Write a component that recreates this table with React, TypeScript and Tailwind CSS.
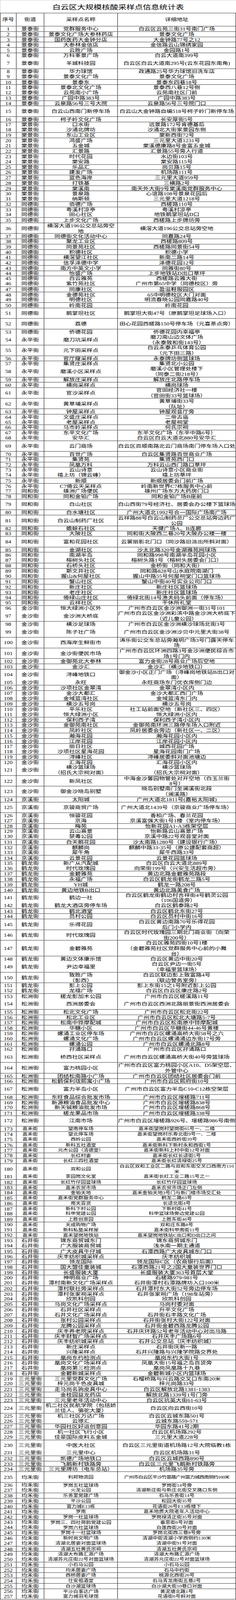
import React, { useState } from 'react'

// 街道|采样点名称|详细地址   ("^" = line break inside a cell)
const ROWS: string[] = [
  '景泰街|党群服务中心|白云区云苑三街31号南门广场',
  '景泰街|景泰文化广场大参林药店|景泰文化广场',
  '景泰街|国药医药大金钟分店|大金钟路77号之12',
  '景泰街|大参林金信店|金信路云山锦绣家园',
  '景泰街|云胜广场|金园路1号',
  '景泰街|万科峯景广场|白云大道南399号',
  '景泰街|羊城科技园|白云区白云大道南295号(云东花园东南角)',
  '景泰街|华力球馆|政通路25号华力球馆旧洗车店',
  '景泰街|景泰文化广场|景泰文化广场',
  '景泰街|景泰东|景泰东四巷18号',
  '景泰街|景泰北文化广场|景泰西八巷12号侧',
  '景泰街|云苑南小广场|云苑南社区门前',
  '景泰街|广园中路383号|广园中路383号',
  '景泰街|云泉路56号三号大院|云泉路56号三号院门口',
  '景泰街|白云山西南门新停车场|白云山大金钟路自编518号柯子岭门新停车场',
  '景泰街|柯子岭文化广场|长安厚街5号',
  '棠景街|口水街|远景路172号肯德基后',
  '棠景街|沙涌北牌坊|沙涌北大街家景园东侧',
  '棠景街|东山工业区|棠新西街72号',
  '棠景街|鸿盛广场|三元里大道1231号',
  '棠景街|五金城|棠溪德康路8号金富五金城',
  '棠景街|汇景路|汇景路55号旁人行道',
  '棠景街|时代花园|水边街103号',
  '棠景街|棠安路|棠安路115号',
  '棠景街|乐品汇|岗贝路15号',
  '棠景街|建发广场|机场路111号',
  '棠景街|蓝色海岸|三元里大道959号',
  '棠景街|打铁基|三横路2号',
  '棠景街|棠溪南|南天外大街9号棠溪南党群服务中心',
  '棠景街|景泉路|心谊路108号景泉花园后',
  '棠景街|纳斯顿|三元里大道1218号',
  '同德街|佰德广场|西槎路110号',
  '同德街|粤溪村凉亭|粤溪村凉亭',
  '同德街|田心社区|地铁鹅掌坦站D口',
  '同德街|上步文化广场|西槎路上步牌坊旁',
  '同德街|横滘大道196公交总站旁空^地|横滘大道196公交总站旁空地',
  '同德街|同德街文化活动中心|同嘉路24号',
  '同德街|聚龙工业区|西槎路809号',
  '同德街|同景苑社区|西槎路同景街54号',
  '同德街|积德社区|积德小学',
  '同德街|横滘望江社区|新南二路14号',
  '同德街|信孚泽德中学|泽德花园12号',
  '同德街|南方中英文小学|同雅街80号',
  '同德街|怡盛广场|上步地铁站D出口草坪',
  '同德街|白云雅苑|西槎路云雅大街',
  '同德街|紫竹苑社区|广州市第65中学（同德校区）旁',
  '同德街|同康社区|盈溢鞋服园区',
  '同德街|金德苑社区|65中明德校区大门对面',
  '同德街|明德社区|明流春晓公园同嘉路40号',
  '同德街|岭南花园|岭南花园',
  '同德街|鹅掌坦社区|鹅掌坦大街47号（原鹅掌坦足球场入口）',
  '同德街|荔德|田心花园西槎路150号停车场（元喜茶点旁）',
  '同德街|侨德花园|侨德花园内幸福亭',
  '永平街|磨刀坑采样点|磨刀南山边文体广场^（永泰致和街143号）',
  '永平街|元下田采样点|白云永泰乒乓体育公园^（元下田三路）',
  '永平街|官厅窿采样点|永泰牌坊侧篮球场',
  '永平街|集贤庄采样点|集贤北小公园',
  '永平街|磨溪小区采样点|磨溪小区管理处楼下^（同泰二街218号）',
  '永平街|解放庄采样点|解放庄北路停车场',
  '永平街|横岗采样点|横岗球场',
  '永平街|官沙采样点|官田经济社一楼^（官田街33号篮球场）',
  '永平街|黄草埔采样点|黄草埔街33号^（队址）',
  '永平街|钟屋采样点|钟屋观音厅旁',
  '永平街|文盛庄采样点|二帝古庙',
  '永平街|老屋采样点|老屋祠堂',
  '永平街|马市岭采样点|何氏宗祠',
  '永平街|东平文化广场|东平文化广场（东平中路6号）',
  '永平街|安华汇|白云区白云大道北880号安华汇',
  '永平街|云门商场|白云区百顺南路北云门商场南门停车场入口处',
  '永平街|百世广场|白云区集贤路百世商业广场',
  '永平街|集贤苑|集贤苑西门口',
  '永平街|凤凰万科|万科云山西门路口草坪',
  '永平街|云山诗意|云山诗意小区商业街',
  '永平街|禧上坊（锦云峰）|禧上坊草坪',
  '永平街|新顺|新顺居委会门前广场',
  '永平街|C7倚云天采样点|岭南新世界C7栋服务中心前',
  '同和街|雄洲广场便民|雄州广场东方大药房门口',
  '同和街|同和金铂广场|同和金铂广场B座前',
  '同和街|白山社区|白山西街79号经济社、居委会办公楼下篮球场',
  '同和街|白水塘社区|广州大道北1992号合一国际广场南广场',
  '同和街|白云山制药厂社区|云祥路88号白云山制药总厂公交总站旁边药厂^公园',
  '同和街|蟾蜍石社区|天健广场A、B连廊',
  '同和街|大陂社区|同和街大陂西二巷20号大陂办公楼一楼',
  '同和街|富和花园社区|云裳丽影北门口（同沙路旧派出所斜对面）',
  '同和街|金湖社区|沙太北路320号金湖雅苑网球场',
  '同和街|南湖半岛|同和路998号南湖半岛花园小区',
  '同和街|榕树头社区|榕树头路1号（榕树头居委会门口）',
  '同和街|石桥头社区|金桥街（同和大街）',
  '同和街|斯文井社区|同和路828号山水庭院南湖门',
  '同和街|握山&何屋社区|握山中路55号何屋祠堂门口篮球场',
  '同和街|蟹山社区|蟹山中街40号实业公司门口',
  '同和街|新庄社区|新庄社区篮球场',
  '同和街|老庄社区|新庄社区篮球场',
  '同和街|倚绿山庄社区|倚绿北街14号渔夫码头前面（停车场）',
  '同和街|云祥社区|干休所礼堂',
  '金沙街|恒大绿洲小区外|广州市白云区金沙洲御洲一街31号101',
  '金沙街|金沙洲大桥底|广州市白云区金沙洲彩滨中路金沙洲大桥底下^（近儿童公园）',
  '金沙街|横沙足球场|广州市白云区金沙洲横沙球场北街3号',
  '金沙街|陈子壮广场|广州市白云区金沙洲沙贝中元里大街38号',
  '金沙街|西海岸生鲜街市|涛乐街公交车总站旁瀚玥广场3号门露天停车^场',
  '金沙街|金沙街便民市场|广州市白云区环洲四路3号金沙洲便民综合市^场1号门内',
  '金沙街|金御苑北大参林|富力金街28号商业广场后空地',
  '金沙街|金沙汇|金沙汇（横沙地铁口）',
  '金沙街|浔峰地铁口|御金沙小区正门广场（浔峰岗地铁站B出口对^面）',
  '金沙街|永旺|永旺商场东门优衣库侧门边',
  '金沙街|沙项社区金翠湾|金翠湾小区内',
  '金沙街|金沙大都汇|金沙大都汇西门广场',
  '金沙街|金域蓝湾社区|金域蓝湾东门内',
  '金沙街|横沙五号岗|横沙五号岗',
  '金沙街|平乐社区|社工站前面空地（新社区三、四区）',
  '金沙街|恒大绿洲小区|恒大绿洲小区内',
  '金沙街|保利西子湾|保利西子湾小区内',
  '金沙街|金御苑南社区|金御苑南环洲三路停车场入口附近',
  '金沙街|凤岭社区|凤岭居委会旁边（新社区一、二区）',
  '金沙街|瀚海花园|瀚海花园小区内',
  '金沙街|江岸花园|江岸花园小区内',
  '金沙街|丽日社区|城西花园广场',
  '金沙街|沙项社区星海花园|星海花园南门广场',
  '金沙街|浔峰社区|浔峰居委斜对面池塘边',
  '金沙街|汇海花园|汇海花园小区内',
  '金沙街|横沙篮球场^（招氏大宗祠对面）|横沙篮球场^（招氏大宗祠对面）',
  '金沙街|新凤社区|中海金沙馨园物管处对开空地（白玉兰街^8号）',
  '金沙街|御金沙晓岛别墅|晓岛别墅南门至澜溪街北段^（澜溪路）',
  '京溪街|太阳城|广州大道北1811号(嘉裕太阳城)',
  '京溪街|京骏商贸广场|广州大道北1439号（京骏商业广场停车场）',
  '京溪街|恒骏花园|香柏广场、春兰花园',
  '京溪街|京海|京溪富强大街1号1楼（室内停车场）',
  '京溪街|梅苑|怡新花园A1-A3栋架空层',
  '京溪街|云山熹景|怡新路云山熹景广场',
  '京溪街|禁毒公园|京溪中路22号观音堂对面',
  '京溪街|白天鹅花园|沙太南路1280号（建设银行广场）',
  '京溪街|麒麟岗|麒麟中路33-35号（原公建配套商超）',
  '京溪街|犀牛角|犀牛西路33号',
  '京溪街|云景花园|云景花园篮球场',
  '鹤龙街|新广从汽配城|白云区白云大道北889号',
  '鹤龙街|时代玫瑰园|向荣街199号（兴安生活超市旁）',
  '鹤龙街|金碧雅苑|黄边北路金碧雅苑路段',
  '鹤龙街|永福广场|白云区鹤龙街鹤龙二路5号',
  '鹤龙街|YH城|鹤龙一路208号',
  '鹤龙街|黄边地铁B出口|黄边北路美食广场',
  '鹤龙街|鹤边一社|白云区鹤龙街鹤边村吉祥街4号鹤灵公园^（106国道旁）',
  '鹤龙街|鹤龙大酒店旁停车场|白云区鹤泰路2号',
  '鹤龙街|鹤北酒堂|白云区鹤北东街27号',
  '鹤龙街|员村公园|白云区员村中街16号',
  '鹤龙街|乐得花园|白云区黄边南路70号乐得花园^后门小学内',
  '鹤龙街|时代玫瑰园|白云区时代玫瑰园三期北门商业街（向荣^街200号）',
  '鹤龙街|金碧雅苑|白云区雅苑四街10号1楼^（金碧雅苑社区党群服务中心前的小舞^台）',
  '鹤龙街|黄边文体康乐馆|白云区黄边中街20号',
  '鹤龙街|尹边幸福里|白云区尹边一街5号^（幸福里篮球场）',
  '鹤龙街|致胜广场^（彭西）|白云区联边彭上致富路4号^（联边警务室旁）',
  '鹤龙街|彭上公园|彭上东街15之1号附近彭上公园',
  '鹤龙街|龙禧广场|白云区白云区康庄路2号',
  '松洲街|槎龙彭加木公园|广州市白云区槎溪路11号',
  '松洲街|西洲居委会|广州市白云区西洲北路丽景街西洲居委会',
  '松洲街|松北文化广场|广州市白云区松北街22号',
  '松洲街|松北工业区|广州市白云区松北大塘路5-7号',
  '松洲街|松南中铧摩配城|广州市白云区松南原中铧摩配城',
  '松洲街|华糖小区|广州市白云区华糖街44-46号黄楼',
  '松洲街|螺涌工业区停车场|广州市白云区螺涌高桥大街58号之六',
  '松洲街|螺涌文化广场|广州市白云区螺涌涌边东街17号旁',
  '松洲街|螺涌公园|广州市白云区螺涌北路8号',
  '松洲街|孖涌路口|广州市白云区孖涌路口',
  '松洲街|桥西社区采样点|广州市白云区螺涌高桥大街40号旁篮球场',
  '松洲街|富力桃园小区|广州市白云区富力桃园小区A10、D5架空层、^外管中心',
  '松洲街|团结松南路小广场|广州市白云区团结社区居委会门前',
  '松洲街|松鹤保利珑熙寓小广场|广州市白云区熙府街10号',
  '松洲街|富力半岛小区|广州市白云区富力半岛C10-C12栋空架层',
  '松洲街|东旺食品综合批发市场|广州市白云区增槎路711号',
  '松洲街|新源粮油食品批发中心|广州市白云区增槎路838号',
  '松洲街|新天铖粮油批发市场|广州市白云区增槎路868号',
  '松洲街|槎龙果品市场|广州市白云区增槎路338号',
  '松洲街|江南市场|广州市白云区增槎路926号、增槎路986号南侧',
  '嘉禾街|望南停车场|嘉禾街望岗村望岗街65号一、二楼',
  '嘉禾街|望北停车场|嘉禾街望岗村乐寿北街9号一、二楼',
  '嘉禾街|西岭公园|嘉禾街西岭街39号',
  '嘉禾街|新科五社酒堂|嘉禾街新科下新村永和西街1号',
  '嘉禾街|元杰公园（清德堂）|嘉禾街新科上村中街12号对面',
  '嘉禾街|长红村委|嘉禾街长红长迳街5号',
  '嘉禾街|长红三四社酒堂|嘉禾街长红清禄街25号',
  '嘉禾街|双和公园|白云区双和工业区二路与双和东街交叉口西南方110^米',
  '嘉禾街|茶园岗文化室|嘉禾街长红工业二路15号之一',
  '嘉禾街|长红竹仔园篮球场|长红竹仔园篮球场',
  '嘉禾街|嘉禾农贸市场|嘉禾农贸市场正门左侧',
  '嘉禾街|金铂天地|嘉禾金铂天地3号门与新门楼市场交汇处',
  '嘉禾街|嘉禾街党群服务中心|鹤龙二路63号',
  '嘉禾街|南天百货|长迳北街4号',
  '嘉禾街|新科下村公园|下新村街41号',
  '嘉禾街|科甲党建公园|科甲篮球场旁边党建公园',
  '嘉禾街|上胜创意园|上胜东街46号',
  '嘉禾街|天成购物广场|双和庄东路8号',
  '嘉禾街|新科私塾采样屋|嘉禾街科甲南街11号',
  '嘉禾街|嘉禾望岗地铁站|嘉禾望岗地铁站C出口和D出口之间',
  '石井街|锦东商贸城东门|锦东商贸城东门',
  '石井街|广大服装商贸城|浅水南一期主通道',
  '石井街|广大皮具牛仔城|石潭西路广大皮具城东门口',
  '石井街|庆丰纺织城采样点|庆丰纺织城',
  '石井街|领龙国际|领龙国际C区（农商银行后面）',
  '石井街|国大盟佳童装城|石潭西路21号之2国大童装世界门口',
  '石井街|长盛服装大厦|长盛服装大厦363号首层大堂',
  '石井街|神明商业广场|石槎路979-981号',
  '石井街|潭村南新文化广场采样点|石井街潭村石潭路牌坊入口100米',
  '石井街|潭村联社旁采样点|石井潭村东大街52号旁边停车场',
  '石井街|潭村张家祠采样点|石井张家祠广场（198车站旁）',
  '石井街|欣凯科创园|欣凯科创园',
  '石井街|马岗文化广场采样点|马岗村委对面',
  '石井街|石井社区采样点|升平文化广场',
  '石井街|石井文化广场采样点|石井街石丰路文化广场',
  '石井街|张村公园采样点|石井街张村大街122号对面',
  '石井街|龙腾公园采样点|石井街金碧西路龙腾公园',
  '石井街|庆丰养老院采样点|石井庆环路52号老年活动中心对出马路',
  '石井街|庆丰财智广场采样点|石井庆丰广场路6号',
  '石井街|庆丰纺织城采样点|石井公交总站（庆丰纺织城）',
  '石井街|新庄采样点|石井街庆新一路',
  '石井街|兴隆采样点|石井兴隆路与兴隆学院路交界处',
  '石井街|凰岗东约检测点|凰岗东约大街1号',
  '石井街|凰岗文化广场采样点|凤凰大街15号福之岛百货旁',
  '石井街|凰岗第三检测点|凰岗凤凰路十九巷',
  '石井街|金碧新城采样点|金碧新城小区内篮球场',
  '三元里街|三元里党群文化广场|石榴桥路与兴云路交叉口东南20米',
  '三元里街|梓元岗千色皮具城|梓元岗路33号',
  '三元里街|走马岗名驹皮具中心|白云区解放北路1381-1383',
  '三元里街|金桂园益龙药店|解放北路1339号1号门旁',
  '三元里街|三元里老年活动中心|白云区抗英大街61-63号',
  '三元里街|机二社区民航学院（包括娇^兰佳人、骆驼大厦）|白云区向云西街10号',
  '三元里街|机三社区万达广场|白云区云城东路501号',
  '三元里街|云璟汇|云城东路559-571',
  '三元里街|华园社区好运创意园|华园东路41号2期',
  '三元里街|机一社区飞行小区|白云区机场路292号',
  '三元里街|佳豪国际皮料五金城|三元里大道228号',
  '三元里街|中医大社区|白云区三元里街道机场路12号大院临教1栋',
  '三元里街|三元里中心|白云区机场路31号',
  '三元里街|凯德广场地铁口|白云区云城西路890号',
  '三元里街|飞鹅新村铁路旁|白云区三元里飞鹅新村铁路旁',
  '三元里街|三元里牌坊（电车总站）|机场路35号旁',
  '均禾街|利邦物流园|广州市白云区平沙竹基路广州富力城西南侧约160米',
  '均禾街|罗岗五社篮球场|罗岗街14号旁',
  '均禾街|火龙公园|清湖新庄街与新庄北街交叉路口东侧',
  '均禾街|乐善里党建广场|石马乐善街14号',
  '均禾街|平沙公园|松园大街35号',
  '均禾街|富力城E13栋|花语街26号E13栋楼下',
  '均禾街|罗南|嘉禾地质大院老年人活动中心',
  '均禾街|罗岗一社篮球场|罗岗禄清正街35号对面',
  '均禾街|罗岗三、四社荷韵党建公园|垂思街6号对面',
  '均禾街|罗岗六社篮球场|白莲西街20号对面',
  '均禾街|罗岗十一社篮球场|罗岗北街西三巷8号旁',
  '均禾街|新时尚文明广场|清湖中街清湖小学西侧约130米',
  '均禾街|清湖北居委对面篮球场|清湖中街91号对面',
  '均禾街|清湖五社黄氏宗祠|清湖五社黄氏宗祠',
  '均禾街|清湖大布路汇源广场|清湖大布路汇源广场',
  '均禾街|清湖苏元庄街22号对面篮球场|清湖苏元庄街22号对面篮球场',
  '均禾街|小石马公园|小石马公园',
  '均禾街|均禾居委广场|石马中约街',
  '均禾街|西桥居委广场|桃源北西街26号',
  '均禾街|仕安祖酒堂|石马青龙南街五巷2号',
  '均禾街|白沙湖篮球场|白沙湖大街10巷口对面',
  '均禾街|平沙白事达广场|黄泥塘北路1号',
  '均禾街|富力城羽毛球馆|花语街6号斜对面',
]

const DOUBLE = new Set([
  7, 15, 36, 51, 52, 54, 55, 58, 61, 62, 69, 79, 81, 84, 97, 99, 100, 101, 104, 121, 122, 123, 125,
  141, 145, 146, 149, 150, 154, 163, 164, 167, 172, 180, 224, 230, 235,
])
const TRIPLE = new Set([147])

// rows whose top rule is missing in the original scan
const NO_TOP = new Set([
  7, 9, 12, 18, 21, 24, 31, 34, 46, 49, 54, 58, 65, 68, 74, 77, 87, 90, 97, 99, 105, 108, 111, 118,
  121, 127, 130, 133, 136, 142, 149, 152, 154, 160, 163, 170, 175, 181, 188, 191, 194, 201, 204,
  207, 214, 217, 220, 226, 229, 231, 237, 244, 247, 250, 257,
])

const UNIT = 17.75
const SHEET_H = 5344
const FONT = "font-['Liberation_Serif','Noto_Sans_CJK_SC',serif]"
const COLS = 'grid grid-cols-[41px_71px_188px_1fr] overflow-hidden'

function Cell({ text, size, last }: { text: string; size: string; last?: boolean }) {
  return (
    <div
      className={`flex items-center justify-center text-center whitespace-pre leading-[18px] ${
        last ? '' : 'border-r border-black'
      } ${size}`}
    >
      {text.replace(/\^/g, '\n')}
    </div>
  )
}

export default function App() {
  // the browser caps the window height, so fit the whole sheet into what is visible
  const [fit] = useState(() => Math.min(1, window.innerHeight / SHEET_H))

  let units = 0
  const rows = ROWS.map((row, i) => {
    const n = i + 1
    const u = TRIPLE.has(n) ? 3 : DOUBLE.has(n) ? 2 : 1
    const top = Math.round(units * UNIT)
    units += u
    const h = Math.round(units * UNIT) - top
    const [street, name, addr] = row.split('|')
    return { n, h, street, name, addr }
  })

  return (
    <div className="w-[603px] overflow-hidden bg-white" style={{ height: Math.floor(SHEET_H * fit) }}>
      <div
        className={`w-[603px] h-[5344px] bg-white text-black origin-top ${FONT}`}
        style={{ transform: `scaleY(${fit})` }}
      >
        {/* Title */}
        <div className="h-[43px] border-t border-l border-[#c8c8c8] flex items-center justify-center pt-[4px] text-[21px] leading-[24px]">
          白云区大规模核酸采样点信息统计表
        </div>

        <div className="border-l border-r border-b border-black">
          {/* Header */}
          <div className={`${COLS} h-[44px] border-t border-black`}>
            <Cell text="序号" size="text-[15px]" />
            <Cell text="街道" size="text-[15px]" />
            <Cell text="采样点名称" size="text-[15px]" />
            <Cell text="详细地址" size="text-[15px]" last />
          </div>

          {rows.map(({ n, h, street, name, addr }) => {
            const jiahe = n >= 173 && n <= 192
            const junhe = n >= 235
            const small = 'text-[13px]'
            const normal = 'text-[15px]'
            return (
              <div
                key={n}
                className={`${COLS} ${NO_TOP.has(n) ? '' : 'border-t border-black'}`}
                style={{ height: h }}
              >
                <Cell text={String(n)} size={normal} />
                <Cell text={street} size={jiahe ? small : normal} />
                <Cell text={name} size={jiahe || junhe ? small : normal} />
                <Cell
                  text={addr}
                  size={n === 235 ? 'text-[13px] tracking-[-1px]' : jiahe || junhe ? small : normal}
                  last
                />
              </div>
            )
          })}
        </div>
      </div>
    </div>
  )
}
